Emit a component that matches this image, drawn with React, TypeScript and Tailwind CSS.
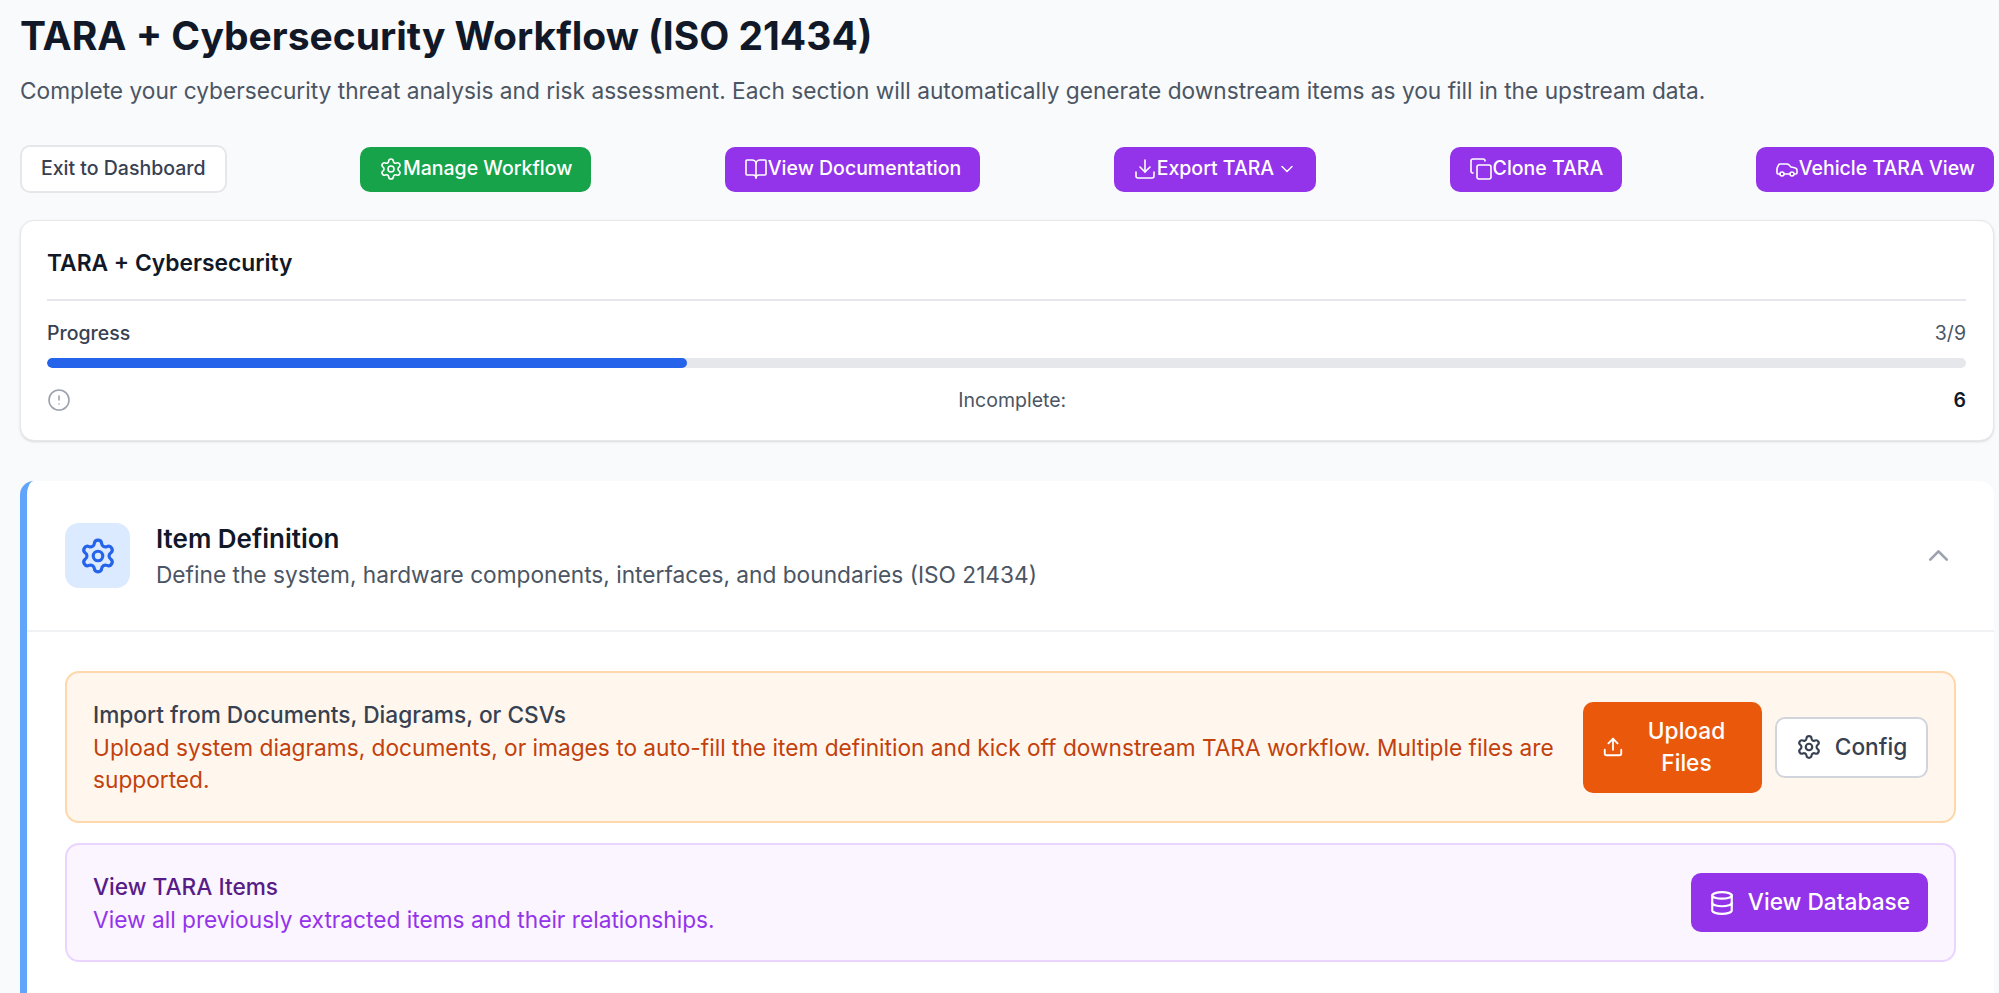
import React from 'react';
import { Settings, BookOpen, Download, ChevronDown, ChevronUp, Copy, Car, CircleAlert, Upload, Database } from 'lucide-react';

const ActionButton: React.FC<{ children: React.ReactNode; className?: string }> = ({ children, className = "" }) => (
  <button type="button" className={`h-[45px] px-[19px] rounded-[10px] text-white text-[19.5px] font-medium flex items-center whitespace-nowrap ${className}`}>
    {children}
  </button>
);

export default function App() {
  return (
    <div className="h-screen overflow-hidden bg-[#f9fafb] pl-[20px] pr-[5px] pt-[13px] font-['Inter',sans-serif]">
      <h1 className="text-[39px] leading-[45px] font-bold text-[#111827]">TARA + Cybersecurity Workflow (ISO 21434)</h1>
      <p className="mt-[18px] text-[22.7px] leading-[30px] text-[#4b5563]">
        Complete your cybersecurity threat analysis and risk assessment. Each section will automatically generate downstream items as you fill in the upstream data.
      </p>

      <div className="mt-[39px] flex items-center justify-between">
        <button type="button" className="h-[48px] px-[19px] rounded-[10px] bg-white border-2 border-[#e5e7eb] text-[19.5px] font-medium text-[#374151] whitespace-nowrap">
          Exit to Dashboard
        </button>
        <ActionButton className="bg-[#16a34a]"><Settings size={24} strokeWidth={1.6} />Manage Workflow</ActionButton>
        <ActionButton className="bg-[#9333ea]"><BookOpen size={24} strokeWidth={1.6} />View Documentation</ActionButton>
        <ActionButton className="bg-[#9333ea]"><Download size={24} strokeWidth={1.6} />Export TARA<ChevronDown size={20} strokeWidth={1.75} className="ml-[3px]" /></ActionButton>
        <ActionButton className="bg-[#9333ea]"><Copy size={24} strokeWidth={1.6} />Clone TARA</ActionButton>
        <ActionButton className="bg-[#9333ea]"><Car size={24} strokeWidth={1.6} />Vehicle TARA View</ActionButton>
      </div>

      <div className="mt-[27px] h-[221px] bg-white rounded-[14px] border border-[#e5e7eb] shadow-sm pl-[26px] pr-[27px] pt-[27px]">
        <h2 className="text-[22.8px] leading-[30px] font-semibold text-[#111827]">TARA + Cybersecurity</h2>
        <div className="mt-[21px] border-t-2 border-[#e5e7eb]" />
        <div className="mt-[19px] flex justify-between text-[19.5px] leading-[26px] text-[#4b5563]">
          <span className="font-medium text-[#374151]">Progress</span>
          <span>3/9</span>
        </div>
        <div className="mt-[12px] h-[10px] rounded-full bg-[#e5e7eb] overflow-hidden">
          <div className="h-full rounded-full bg-[#2563eb]" style={{ width: `${(3 / 9) * 100}%` }} />
        </div>
        <div className="mt-[19px] flex items-center justify-between text-[19.5px] leading-[26px]">
          <CircleAlert size={24} strokeWidth={1.6} className="text-[#9ca3af]" />
          <span className="text-[#4b5563]">Incomplete:</span>
          <span className="font-semibold text-[#111827]">6</span>
        </div>
      </div>

      <div className="mt-[40px] bg-white rounded-[14px] border-l-[7px] border-[#60a5fa] h-[600px]">
        <div className="h-[151px] pl-[38px] pr-[39px] flex items-center border-b-2 border-[#f0f1f3]">
          <div className="w-[65px] h-[65px] rounded-[14px] bg-[#dbeafe] flex items-center justify-center">
            <Settings size={38} strokeWidth={2} className="text-[#2563eb]" />
          </div>
          <div className="ml-[26px] flex-1 pt-[3px]">
            <h3 className="text-[26px] leading-[36px] font-semibold text-[#111827]">Item Definition</h3>
            <p className="text-[22.7px] leading-[36px] text-[#4b5563]">Define the system, hardware components, interfaces, and boundaries (ISO 21434)</p>
          </div>
          <ChevronUp size={33} strokeWidth={2} className="text-[#9ca3af]" />
        </div>

        <div className="pt-[39px] pl-[38px] pr-[38px] flex flex-col gap-[20px]">
          <div className="h-[152px] rounded-[14px] border-2 border-[#fed7aa] bg-[#fff7ed] pl-[26px] pr-[26px] flex items-center gap-[26px]">
            <div className="flex-1 pt-[2px] text-[22.7px] leading-[32.5px]">
              <div className="font-medium text-[#374151]">Import from Documents, Diagrams, or CSVs</div>
              <div className="text-[#c2410c]">Upload system diagrams, documents, or images to auto-fill the item definition and kick off downstream TARA workflow. Multiple files are supported.</div>
            </div>
            <div className="flex items-center gap-[13px]">
              <button type="button" className="w-[179px] h-[91px] rounded-[10px] bg-[#ea580c] text-white text-[22.7px] leading-[32.5px] font-medium flex items-center pl-[19px] pr-[26px] gap-[13px]">
                <Upload size={22} strokeWidth={2} className="shrink-0" />
                <span className="flex-1 text-center">Upload Files</span>
              </button>
              <button type="button" className="w-[153px] h-[61px] rounded-[10px] bg-white border-2 border-[#d1d5db] text-[#374151] text-[22.7px] font-medium flex items-center justify-center gap-[13px]">
                <Settings size={26} strokeWidth={2} />Config
              </button>
            </div>
          </div>

          <div className="h-[119px] rounded-[14px] border-2 border-[#e9d5ff] bg-[#faf5ff] pl-[26px] pr-[26px] flex items-center justify-between">
            <div className="pt-[2px] text-[22.7px] leading-[32.5px]">
              <div className="font-medium text-[#581c87]">View TARA Items</div>
              <div className="text-[#9333ea]">View all previously extracted items and their relationships.</div>
            </div>
            <button type="button" className="w-[237px] h-[59px] rounded-[10px] bg-[#9333ea] text-white text-[22.7px] font-medium flex items-center justify-center gap-[13px]">
              <Database size={26} strokeWidth={2} />View Database
            </button>
          </div>
        </div>
      </div>
    </div>
  );
}
